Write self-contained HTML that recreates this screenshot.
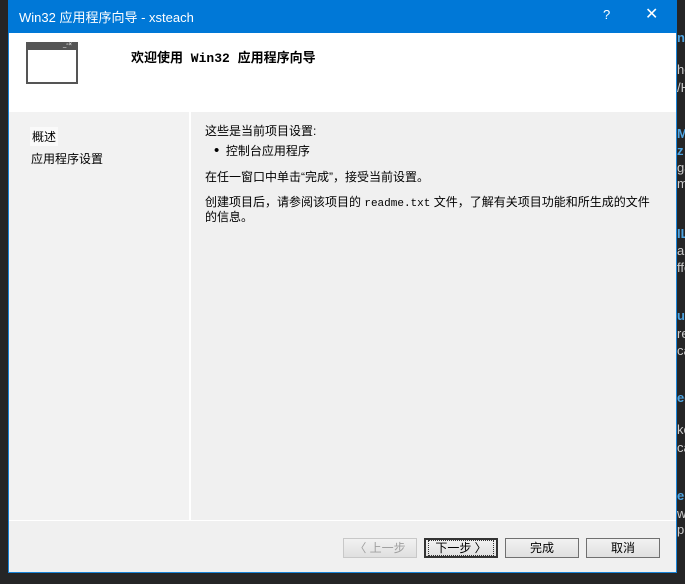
<!DOCTYPE html>
<html><head><meta charset="utf-8"><style>
body{margin:0;width:685px;height:584px;background:#252526;position:relative;overflow:hidden;font-family:"Liberation Sans","Noto Sans CJK SC",sans-serif;font-size:12px;color:#000}
.a{position:absolute}
.side{color:#ccc;font-size:13px;position:absolute;left:677px;white-space:nowrap}
.b{color:#4ea3e0;font-weight:bold}
.btn{position:absolute;top:538px;height:20px;width:74px;border:1px solid #adadad;background:linear-gradient(#f2f2f2,#e0e0e0);box-sizing:border-box;text-align:center;line-height:18px;font-size:12px}
</style></head><body>
<div class="side b" style="top:30px">n</div>
<div class="side" style="top:62px">he</div>
<div class="side" style="top:80px">/H</div>
<div class="side b" style="top:126px">M</div>
<div class="side b" style="top:143px">z</div>
<div class="side" style="top:160px">ga</div>
<div class="side" style="top:176px">m</div>
<div class="side b" style="top:226px">IL</div>
<div class="side" style="top:243px">ar</div>
<div class="side" style="top:260px">ffo</div>
<div class="side b" style="top:308px">u</div>
<div class="side" style="top:326px">re</div>
<div class="side" style="top:343px">ca</div>
<div class="side b" style="top:390px">ed</div>
<div class="side" style="top:422px">ke</div>
<div class="side" style="top:440px">ca</div>
<div class="side b" style="top:488px">er</div>
<div class="side" style="top:506px">w</div>
<div class="side" style="top:522px">pp</div>

<div class="a" style="left:8px;top:0;width:669px;height:573px;background:#f0f0f0;border:1px solid #1883d7;box-sizing:border-box"></div>
<div class="a" style="left:8px;top:0;width:669px;height:33px;background:#0078d7;color:#fff;font-size:13px">
 <span class="a" style="left:11px;top:7px">Win32 应用程序向导 - xsteach</span>
 <span class="a" style="left:595px;top:7px">?</span>
 <span class="a" style="left:637px;top:4px;font-size:16px">✕</span>
</div>
<div class="a" style="left:9px;top:33px;width:667px;height:79px;background:#fff"></div>
<div class="a" style="left:26px;top:42px;width:52px;height:42px;border:2px solid #555;background:#fff;box-sizing:border-box;border-top-width:8px"></div>
<div class="a" style="left:63px;top:42px;font-size:6px;color:#fff;line-height:7px">_▫×</div>
<div class="a" style="left:131px;top:47px;font-weight:bold;font-size:13px;font-family:'Liberation Mono','Noto Sans CJK SC',monospace">欢迎使用 Win32 应用程序向导</div>
<div class="a" style="left:9px;top:112px;width:180px;height:409px;background:#f2f2f2"></div>
<div class="a" style="left:189px;top:112px;width:2px;height:409px;background:#fff"></div>
<div class="a" style="left:9px;top:520px;width:667px;height:1px;background:#fff"></div>
<div class="a" style="left:30px;top:127px;background:#fafafa;padding:1px 2px">概述</div>
<div class="a" style="left:31px;top:150px">应用程序设置</div>
<div class="a" style="left:205px;top:122px">这些是当前项目设置:</div>
<div class="a" style="left:214px;top:142px"><span style="font-size:15px;line-height:12px">•</span>&nbsp;&nbsp;控制台应用程序</div>
<div class="a" style="left:205px;top:168px">在任一窗口中单击“完成”，接受当前设置。</div>
<div class="a" style="left:205px;top:196px;line-height:13px">创建项目后，请参阅该项目的 <span style="font-family:'Liberation Mono',monospace;font-size:11px">readme.txt</span> 文件，了解有关项目功能和所生成的文件<br>的信息。</div>
<div class="btn" style="left:343px;color:#a0a0a0;border-color:#c8c8c8">〈 上一步</div>
<div class="btn" style="left:424px;border:2px solid #333;line-height:16px"><span style="border:1px dotted #333;padding:0 6px">下一步 〉</span></div>
<div class="btn" style="left:505px;border-color:#707070">完成</div>
<div class="btn" style="left:586px;border-color:#707070">取消</div>
</body></html>
